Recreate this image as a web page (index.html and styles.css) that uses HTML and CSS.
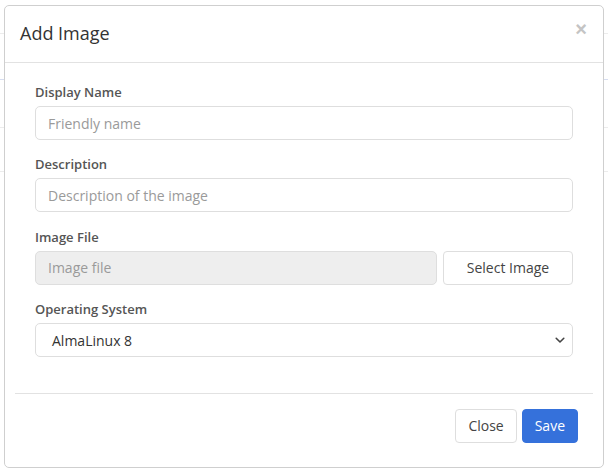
FILE: index.html
```html
<!DOCTYPE html>
<html>
<head>
<meta charset="utf-8">
<link rel="stylesheet" href="styles.css">
</head>
<body>
<div class="backdrop">
  <div class="bg-row r1"></div>
  <div class="bg-row r2"></div>
  <div class="bg-row r3"></div>
  <div class="bg-row r4"></div>
</div>
<div class="modal">
  <div class="modal-header">
    <h4 class="modal-title">Add Image</h4>
    <span class="close">&times;</span>
  </div>
  <div class="modal-body">
    <form class="form">
      <div class="group">
        <label class="label">Display Name</label>
        <input class="input" type="text" placeholder="Friendly name">
      </div>
      <div class="group">
        <label class="label">Description</label>
        <input class="input" type="text" placeholder="Description of the image">
      </div>
      <div class="group">
        <label class="label">Image File</label>
        <div class="file-row">
          <input class="input disabled" type="text" placeholder="Image file" disabled>
          <button type="button" class="btn btn-default select-btn">Select Image</button>
        </div>
      </div>
      <div class="group">
        <label class="label">Operating System</label>
        <div class="select">
          <span>AlmaLinux 8</span>
          <svg class="chev" width="10" height="7" viewBox="0 0 10 7"><path d="M1.2 1.3 L5 5 L8.8 1.3" fill="none" stroke="#444" stroke-width="1.6" stroke-linecap="round" stroke-linejoin="round"/></svg>
        </div>
      </div>
    </form>
  </div>
  <div class="modal-footer">
    <button type="button" class="btn btn-default">Close</button>
    <button type="button" class="btn btn-primary">Save</button>
  </div>
</div>
</body>
</html>
```
FILE: styles.css
```css
* { box-sizing: border-box; }
html, body { margin: 0; padding: 0; }
body {
  width: 608px;
  height: 474px;
  background: #fff;
  font-family: "Open Sans", "Noto Sans", sans-serif;
  color: #333;
  position: relative;
  overflow: hidden;
}
.backdrop { display: flex; flex-direction: column; }
.bg-row { border-bottom: 1px solid #ececec; }
.r1 { height: 34px; }
.r2 { height: 46px; border-bottom-color: #d6ddf0; }
.r3 { height: 48px; }
.r4 { height: 44px; }

.modal {
  position: absolute;
  left: 4px;
  top: 5px;
  width: 600px;
  height: 463px;
  background: #fff;
  border: 1px solid #cfcfcf;
  border-radius: 5px;
  display: flex;
  flex-direction: column;
}
.modal-header {
  height: 57px;
  border-bottom: 1px solid #e2e2e2;
  display: flex;
  align-items: center;
  justify-content: space-between;
  padding: 0 16px 0 15px;
}
.modal-title {
  margin: 0;
  font-size: 18px;
  font-weight: 400;
  color: #333;
  line-height: 26px;
  margin-top: -2px;
}
.close {
  font-size: 20px;
  font-weight: 700;
  color: #c4c4c4;
  line-height: 20px;
  margin-top: -10px;
  font-family: "Liberation Sans", sans-serif;
}
.modal-body {
  padding: 0 10px 0 10px;
}
.form {
  padding: 20px 20px 36px 20px;
  border-bottom: 1px solid #e2e2e2;
  display: flex;
  flex-direction: column;
  gap: 15.35px;
}
.group { display: flex; flex-direction: column; gap: 5px; }
.label {
  font-size: 13px;
  font-weight: 600;
  color: #555;
  line-height: 18px;
}
.input {
  height: 34px;
  width: 100%;
  border: 1px solid #dedede;
  border-radius: 5px;
  padding: 0 12px;
  font-family: inherit;
  font-size: 14px;
  color: #333;
  background: #fff;
  outline: none;
}
.input::placeholder { color: #9a9a9a; }
.input.disabled { background: #eeeeee; }
.file-row { display: flex; gap: 6px; }
.file-row .input { flex: 1; }
.btn {
  height: 34px;
  border-radius: 4px;
  font-family: inherit;
  font-size: 14px;
  padding: 0 12px;
  cursor: pointer;
  line-height: 20px;
}
.btn-default {
  background: #fff;
  border: 1px solid #dedede;
  color: #444;
}
.select-btn { width: 130px; padding: 0; }
.btn-primary {
  background: #3571db;
  border: 1px solid #3571db;
  color: #fff;
}
.select {
  height: 34px;
  border: 1px solid #dedede;
  border-radius: 5px;
  display: flex;
  align-items: center;
  justify-content: space-between;
  padding: 0 7px 0 16px;
  font-size: 14px;
  color: #333;
}
.chev { display: block; }
.modal-footer {
  display: flex;
  justify-content: flex-end;
  gap: 5px;
  padding: 15px 25px 0 0;
}
```
